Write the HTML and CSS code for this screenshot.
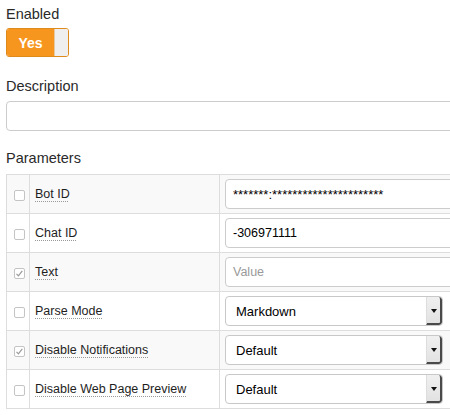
FILE: index.html
```html
<!DOCTYPE html>
<html>
<head>
<meta charset="utf-8">
<link rel="stylesheet" href="styles.css">
</head>
<body>
<div class="page">
  <div class="field-label first">Enabled</div>
  <div class="toggle">
    <span class="toggle-on">Yes</span>
    <span class="toggle-knob"></span>
  </div>

  <div class="field-label desc">Description</div>
  <div class="text-input wide"></div>

  <div class="field-label params">Parameters</div>
  <table class="params-table">
    <colgroup>
      <col class="c-check">
      <col class="c-name">
      <col class="c-value">
    </colgroup>
    <tr class="striped">
      <td class="cell-check"><span class="cb"></span></td>
      <td class="cell-name"><span class="pname">Bot ID</span></td>
      <td class="cell-value"><div class="text-input"><span class="val stars">*******:**********************</span></div></td>
    </tr>
    <tr>
      <td class="cell-check"><span class="cb"></span></td>
      <td class="cell-name"><span class="pname">Chat ID</span></td>
      <td class="cell-value"><div class="text-input"><span class="val">-306971111</span></div></td>
    </tr>
    <tr class="striped">
      <td class="cell-check"><span class="cb checked"><svg viewBox="0 0 11 11" width="11" height="11"><path d="M2.5 5.8 L4.4 7.8 L8.3 2.8" fill="none" stroke="#9a9a9a" stroke-width="1.2"/></svg></span></td>
      <td class="cell-name"><span class="pname">Text</span></td>
      <td class="cell-value"><div class="text-input"><span class="placeholder">Value</span></div></td>
    </tr>
    <tr>
      <td class="cell-check"><span class="cb"></span></td>
      <td class="cell-name"><span class="pname">Parse Mode</span></td>
      <td class="cell-value"><div class="select"><span class="sel-val">Markdown</span><span class="sel-btn"><span class="tri"></span></span></div></td>
    </tr>
    <tr class="striped">
      <td class="cell-check"><span class="cb checked"><svg viewBox="0 0 11 11" width="11" height="11"><path d="M2.5 5.8 L4.4 7.8 L8.3 2.8" fill="none" stroke="#9a9a9a" stroke-width="1.2"/></svg></span></td>
      <td class="cell-name"><span class="pname">Disable Notifications</span></td>
      <td class="cell-value"><div class="select"><span class="sel-val">Default</span><span class="sel-btn"><span class="tri"></span></span></div></td>
    </tr>
    <tr>
      <td class="cell-check"><span class="cb"></span></td>
      <td class="cell-name"><span class="pname">Disable Web Page Preview</span></td>
      <td class="cell-value"><div class="select"><span class="sel-val">Default</span><span class="sel-btn"><span class="tri"></span></span></div></td>
    </tr>
  </table>
</div>
</body>
</html>
```

FILE: styles.css
```css
html, body {
  margin: 0;
  padding: 0;
  overflow: hidden;
  background: #fff;
}

body {
  font-family: "Liberation Sans", Arial, sans-serif;
  color: #2a2a2a;
}

.page {
  padding-left: 6px;
  width: 490px;
}

.field-label {
  font-size: 14.5px;
  line-height: 20px;
  height: 20px;
  color: #2a2a2a;
}

.first { padding-top: 4px; }
.desc { margin-top: 19px; }
.params { margin-top: 17px; }

.toggle {
  margin-top: 4px;
  display: inline-flex;
  height: 29px;
  box-sizing: border-box;
  border: 1px solid #df8a1c;
  border-radius: 3px;
  overflow: hidden;
}

.toggle-on {
  width: 47px;
  background: #f7961f;
  color: #fff;
  font-weight: bold;
  font-size: 14px;
  display: flex;
  align-items: center;
  justify-content: center;
}

.toggle-knob {
  width: 13px;
  background: #efefef;
  border-left: 1px solid #e4c9a4;
}

.text-input {
  height: 30px;
  box-sizing: border-box;
  border: 1px solid #ccc;
  border-radius: 4px;
  background: #fff;
  display: flex;
  align-items: center;
  padding-left: 7px;
  font-size: 12.5px;
  color: #000;
}

.stars {
  font-size: 13px;
}

.wide {
  margin-top: 5px;
  width: 480px;
}

.params-table {
  margin-top: 6px;
  border-collapse: collapse;
  table-layout: fixed;
  width: 484px;
}

.c-check { width: 23px; }
.c-name { width: 190px; }

.params-table td {
  border: 1px solid #ddd;
  height: 30px;
  padding: 4px 0;
  vertical-align: middle;
}

.params-table tr.striped td {
  background: #f9f9f9;
}

.cell-check {
  text-align: center;
}

.cb {
  display: inline-flex;
  width: 11px;
  height: 11px;
  box-sizing: border-box;
  border: 1px solid #c4c4c4;
  border-radius: 2px;
  background: #fff;
  vertical-align: middle;
  margin-left: 2px;
  margin-top: 1px;
  position: relative;
}

.cb svg {
  position: absolute;
  left: -1px;
  top: -1px;
}

.params-table td.cell-name {
  padding-left: 5px;
  font-size: 12.5px;
  color: #1e1e1e;
}

.pname {
  text-decoration: underline dotted #999;
  text-underline-offset: 3px;
  text-decoration-thickness: 1px;
}

.params-table td.cell-value {
  padding-left: 5px;
}

.placeholder {
  color: #999;
}

.select {
  width: 218px;
  height: 30px;
  box-sizing: border-box;
  border: 1px solid #c8c8c8;
  border-radius: 4px;
  background: #fff;
  display: flex;
  align-items: stretch;
  font-size: 13px;
  color: #000;
  overflow: hidden;
}

.sel-val {
  flex: 1;
  display: flex;
  align-items: center;
  padding-left: 10px;
}

.sel-btn {
  width: 13px;
  background: linear-gradient(#f0f0f0, #e2e2e2);
  border-left: 1px solid #ddd;
  border-right: 2px solid #4a4a4a;
  border-bottom: 2px solid #4a4a4a;
  border-radius: 0 3px 3px 0;
  display: flex;
  align-items: center;
  justify-content: center;
}

.tri {
  width: 0;
  height: 0;
  border-left: 3px solid transparent;
  border-right: 3px solid transparent;
  border-top: 4px solid #111;
  margin-top: 1px;
}
```
